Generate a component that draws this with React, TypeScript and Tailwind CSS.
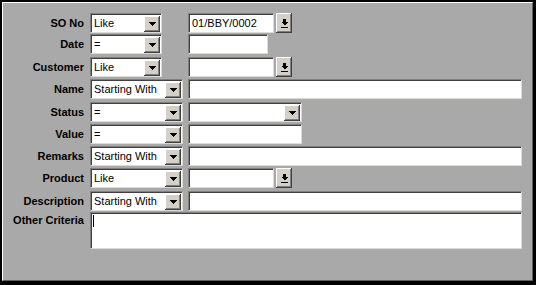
import React from 'react'

const SUNKEN =
  'bg-white border border-t-[#808080] border-l-[#808080] border-b-[#dcdcd4] border-r-[#dcdcd4] shadow-[inset_1px_1px_0_#404040]'
const RAISED =
  'bg-[#d4d0c8] shadow-[inset_-1px_-1px_0_#404040,inset_1px_1px_0_#ffffff,inset_-2px_-2px_0_#808080]'

function ArrowDown() {
  return (
    <svg width="7" height="4" viewBox="0 0 7 4" shapeRendering="crispEdges">
      <polygon points="0,0 7,0 3.5,4" fill="#000" />
    </svg>
  )
}

function ArrowToLine() {
  return (
    <svg width="7" height="9" viewBox="0 0 7 9" shapeRendering="crispEdges">
      <rect x="2" y="0" width="3" height="3" fill="#000" />
      <polygon points="0,3 7,3 3.5,6.5" fill="#000" />
      <rect x="0" y="8" width="7" height="1" fill="#000" />
    </svg>
  )
}

function Combo({ value, w }: { value?: string; w: string }) {
  return (
    <div className={`flex items-center h-[20px] ${w} ${SUNKEN}`}>
      <span className="flex-1 pl-[3px] text-[11px] leading-none text-black whitespace-nowrap overflow-hidden">{value}</span>
      <div className={`flex items-center justify-center w-[16px] h-[16px] mr-[1px] mt-[1px] ${RAISED}`}>
        <ArrowDown />
      </div>
    </div>
  )
}

function TextBox({ value, w }: { value?: string; w: string }) {
  return (
    <div className={`flex items-center h-[20px] ${w} ${SUNKEN}`}>
      <span className="pl-[3px] text-[11px] leading-none text-black whitespace-nowrap">{value}</span>
    </div>
  )
}

function LookupBox({ value }: { value?: string }) {
  return (
    <div className="flex items-center gap-[2px]">
      <TextBox value={value} w="w-[86px]" />
      <div className={`flex items-center justify-center w-[16px] h-[20px] ${RAISED}`}>
        <ArrowToLine />
      </div>
    </div>
  )
}

function Row({ label, op, opWide, mt, children }: { label: string; op: string; opWide?: boolean; mt: string; children: React.ReactNode }) {
  return (
    <div className={`flex items-center h-[20px] ${mt}`}>
      <div className="w-[81px] text-right text-[11px] font-bold text-black leading-none">{label}</div>
      <div className="w-[98px] ml-[6px]">
        <Combo value={op} w={opWide ? 'w-[93px]' : 'w-[72px]'} />
      </div>
      {children}
    </div>
  )
}

export default function App() {
  return (
    <div className="w-[536px] h-[285px] bg-black pt-[2px] pl-[2px]" style={{ fontFamily: '"Liberation Sans", Arial, sans-serif' }}>
      <div className="w-[531px] h-[279px] bg-[#a9a9a9] border border-t-white border-l-white border-b-[#606060] border-r-[#606060] pt-[10px] flex flex-col">
        <Row label="SO No" op="Like" mt="mt-0">
          <LookupBox value="01/BBY/0002" />
        </Row>
        <Row label="Date" op="=" mt="mt-[1px]">
          <TextBox w="w-[80px]" />
        </Row>
        <Row label="Customer" op="Like" mt="mt-[3px]">
          <LookupBox />
        </Row>
        <Row label="Name" op="Starting With" opWide mt="mt-[2px]">
          <TextBox w="w-[334px]" />
        </Row>
        <Row label="Status" op="=" opWide mt="mt-[3px]">
          <Combo w="w-[114px]" />
        </Row>
        <Row label="Value" op="=" opWide mt="mt-[2px]">
          <TextBox w="w-[114px]" />
        </Row>
        <Row label="Remarks" op="Starting With" opWide mt="mt-[2px]">
          <TextBox w="w-[334px]" />
        </Row>
        <Row label="Product" op="Like" opWide mt="mt-[2px]">
          <LookupBox />
        </Row>
        <Row label="Description" op="Starting With" opWide mt="mt-[3px]">
          <TextBox w="w-[334px]" />
        </Row>
        <div className="flex items-start mt-[1px]">
          <div className="w-[81px] pt-[3px] text-right text-[11px] font-bold text-black leading-none">Other Criteria</div>
          <div className={`ml-[6px] w-[432px] h-[37px] pl-[2px] pt-[2px] ${SUNKEN}`}>
            <div className="w-[1px] h-[12px] bg-black" />
          </div>
        </div>
      </div>
    </div>
  )
}
